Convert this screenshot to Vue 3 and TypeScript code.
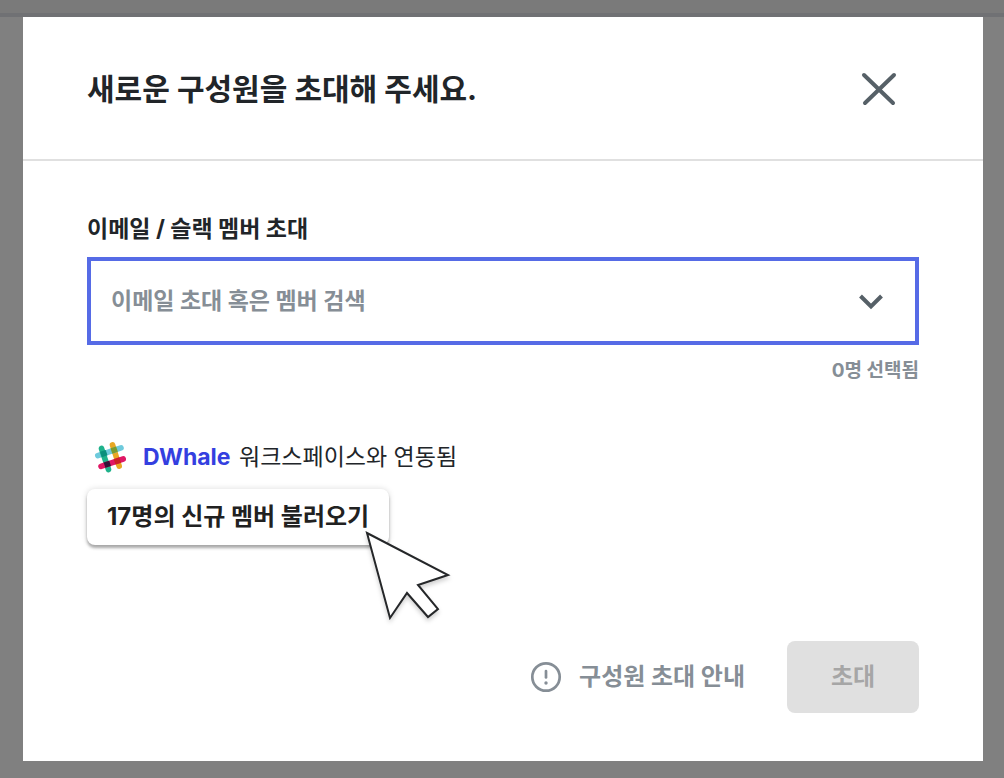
<script setup lang="ts">
import { computed, ref } from 'vue'

const query = ref('')
const selected = ref<string[]>([])
const workspace = 'DWhale'
const newMembers = 17
const canInvite = computed(() => selected.value.length > 0)
</script>

<template>
  <div class="backdrop">
    <section class="dialog" role="dialog" aria-modal="true" aria-labelledby="dialog-title">
      <header class="head">
        <h1 id="dialog-title">새로운 구성원을 초대해 주세요.</h1>
        <button class="close" type="button" aria-label="닫기">
          <svg width="48" height="48" viewBox="0 0 48 48" fill="none" stroke="currentColor" stroke-width="4" stroke-linecap="round">
            <path d="M9 10 38 38M39 10 10 38" />
          </svg>
        </button>
      </header>

      <div class="body">
        <label class="label" for="member-search">이메일 / 슬랙 멤버 초대</label>
        <div class="combo">
          <input id="member-search" v-model="query" type="text" placeholder="이메일 초대 혹은 멤버 검색" autocomplete="off" />
          <button class="toggle" type="button" aria-label="목록 열기">
            <svg width="32" height="32" viewBox="0 0 32 32" fill="none" stroke="currentColor" stroke-width="4">
              <path d="M5.500 11 16 21.500 26.500 11" />
            </svg>
          </button>
        </div>
        <p class="count">{{ selected.length }}명 선택됨</p>

        <div class="linked">
          <svg class="slack" width="32" height="32" viewBox="0 0 32 32" fill="none" stroke-width="5.6" stroke-linecap="round">
            <path d="M18.5 3.800 25.2 25.2" stroke="#e8a723" />
            <path d="M3.800 14.600 27 6.800" stroke="#6ecadc" />
            <path d="M7.500 7.500 14.500 28.500" stroke="#1fb28b" />
            <path d="M7 25.400 29.200 18" stroke="#e01765" />
            <g stroke-linecap="butt">
              <path d="M7 13.500 12.600 11.600" stroke="#0a8f7c" />
              <path d="M17.400 10 23 8.100" stroke="#7a9b2e" />
              <path d="M10.500 24.200 16.100 22.300" stroke="#361238" />
              <path d="M20.600 20.900 26.200 19" stroke="#cc2027" />
            </g>
          </svg>
          <p><strong>{{ workspace }}</strong> 워크스페이스와 연동됨</p>
        </div>

        <div class="load-wrap">
          <button class="load" type="button">{{ newMembers }}명의 신규 멤버 불러오기</button>
          <svg class="pointer" width="92" height="96" viewBox="0 0 92 96" aria-hidden="true">
            <path d="M4 4 85 46 55 56 75 80 65 88 44 64 27 89Z" fill="#fff" stroke="#252729" stroke-width="2" />
          </svg>
        </div>
      </div>

      <footer class="foot">
        <button class="guide" type="button">
          <svg width="32" height="32" viewBox="0 0 32 32" fill="none" stroke="currentColor" stroke-width="2.7" stroke-linecap="round">
            <circle cx="16" cy="16" r="13.7" />
            <path d="M16 10v6.500" />
            <path d="M16 22v.1" stroke-width="3.4" />
          </svg>
          구성원 초대 안내
        </button>
        <button class="invite" type="button" :disabled="!canInvite">초대</button>
      </footer>
    </section>
  </div>
</template>

<style>
body {
  margin: 0;
  background: #808080;
}
</style>

<style scoped>
.backdrop {
  box-sizing: border-box;
  min-height: 100vh;
  padding: 17px 21px 17px 23px;
  background: linear-gradient(#7a7a7a 13px, #707174 13px, #707174 17px, #808080 17px);
  font-family: Inter, "Noto Sans CJK KR", sans-serif;
  font-size: 23px;
  line-height: 32px;
  color: #212529;
}
.dialog {
  background: #fff;
}
button,
input {
  margin: 0;
  padding: 0;
  border: 0;
  background: none;
  font: inherit;
  color: inherit;
}
button {
  cursor: pointer;
}
svg {
  display: block;
  flex: none;
}
.head {
  display: flex;
  align-items: center;
  justify-content: space-between;
  padding: 48px 80px 46px 64px;
  border-bottom: 2px solid #e0e0e0;
}
h1 {
  margin: 0;
  font-size: 30px;
  line-height: 48px;
  font-weight: 700;
}
.close {
  color: #566067;
}
.body {
  padding: 52px 64px 0;
}
.label {
  display: block;
  margin-bottom: 12px;
  font-weight: 700;
}
.combo {
  display: flex;
  align-items: center;
  padding: 0 28px 0 20px;
  border: 4px solid #566be6;
}
.combo input {
  flex: 1;
  min-width: 0;
  height: 80px;
  font-weight: 700;
  outline: none;
}
.combo input::placeholder {
  color: #868e96;
  opacity: 1;
}
.toggle {
  color: #566067;
}
.count {
  margin: 10px 0 0;
  text-align: right;
  font-size: 19px;
  font-weight: 700;
  color: #868e96;
}
.linked {
  display: flex;
  align-items: center;
  gap: 16px;
  margin-top: 54px;
  padding-left: 8px;
}
.slack {
  margin-left: -1px;
  margin-right: 1px;
}
.linked p {
  margin: 0;
}
.linked strong {
  margin-right: 2px;
  font-weight: 700;
  color: #343fe0;
}
.load-wrap {
  position: relative;
  width: fit-content;
  margin-top: 16px;
}
.load {
  height: 56px;
  padding: 0 20px;
  border-radius: 8px;
  background: #fff;
  box-shadow: 0 3px 3px rgba(0, 0, 0, 0.3), 0 0 6px rgba(0, 0, 0, 0.14);
  font-size: 24px;
  font-weight: 700;
  white-space: nowrap;
  color: #212121;
}
.pointer {
  position: absolute;
  top: 40px;
  right: -66px;
  filter: drop-shadow(0 3px 2px rgba(0, 0, 0, 0.18));
  pointer-events: none;
}
.foot {
  display: flex;
  align-items: center;
  justify-content: flex-end;
  gap: 42px;
  padding: 96px 64px 48px;
  font-size: 24px;
  font-weight: 700;
}
.guide {
  display: flex;
  align-items: center;
  gap: 17px;
  color: #868e96;
}
.invite {
  width: 132px;
  height: 72px;
  border-radius: 8px;
  background: #e0e0e0;
  color: #a6a6a6;
}
</style>
